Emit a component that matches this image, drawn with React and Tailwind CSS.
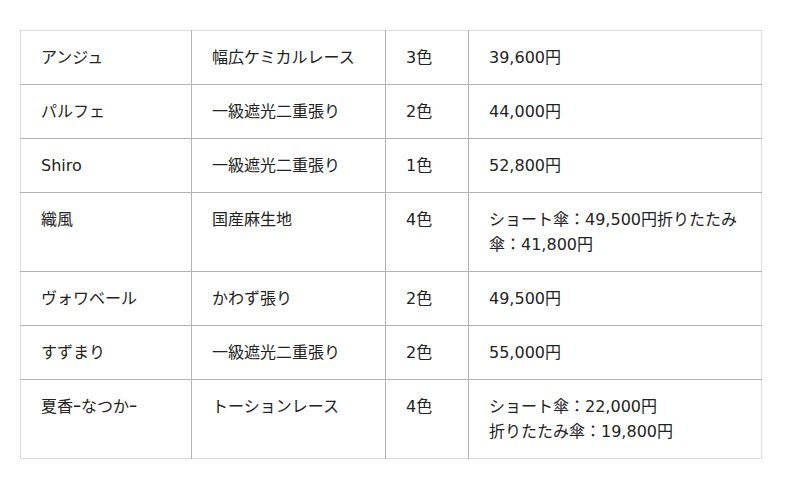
const rows = [
  { name: 'アンジュ', fabric: '幅広ケミカルレース', colors: '3色', price: ['39,600円'] },
  { name: 'パルフェ', fabric: '一級遮光二重張り', colors: '2色', price: ['44,000円'] },
  { name: 'Shiro', fabric: '一級遮光二重張り', colors: '1色', price: ['52,800円'] },
  { name: '織風', fabric: '国産麻生地', colors: '4色', price: ['ショート傘：49,500円折りたたみ傘：41,800円'] },
  { name: 'ヴォワベール', fabric: 'かわず張り', colors: '2色', price: ['49,500円'] },
  { name: 'すずまり', fabric: '一級遮光二重張り', colors: '2色', price: ['55,000円'] },
  { name: '夏香ｰなつかｰ', fabric: 'トーションレース', colors: '4色', price: ['ショート傘：22,000円', '折りたたみ傘：19,800円'] },
]

const App = () => {
  return (
    <div className="bg-white min-h-[489px] pt-[30px] pl-[20px] font-['DejaVu_Sans','Noto_Sans_CJK_JP',sans-serif] text-[16px] leading-[25px] text-[#222]">
      <table className="w-[741px] table-fixed border-collapse border border-[#dcdcdc]">
        <colgroup>
          <col className="w-[171px]" />
          <col className="w-[194px]" />
          <col className="w-[83px]" />
          <col className="w-[293px]" />
        </colgroup>
        <tbody>
          {rows.map((r) => (
            <tr key={r.name} className="border-t border-[#b4b4b4] first:border-t-0">
              <td className="align-top px-[20px] pt-[14px] pb-[14px]">{r.name}</td>
              <td className="align-top px-[20px] pt-[14px] pb-[14px] border-l border-[#b4b4b4]">{r.fabric}</td>
              <td className="align-top px-[20px] pt-[14px] pb-[14px] border-l border-[#b4b4b4]">{r.colors}</td>
              <td className="align-top pl-[20px] pr-[14px] pt-[14px] pb-[14px] border-l border-[#b4b4b4]">
                {r.price.map((p) => (
                  <div key={p}>{p}</div>
                ))}
              </td>
            </tr>
          ))}
        </tbody>
      </table>
    </div>
  )
}

export default App
